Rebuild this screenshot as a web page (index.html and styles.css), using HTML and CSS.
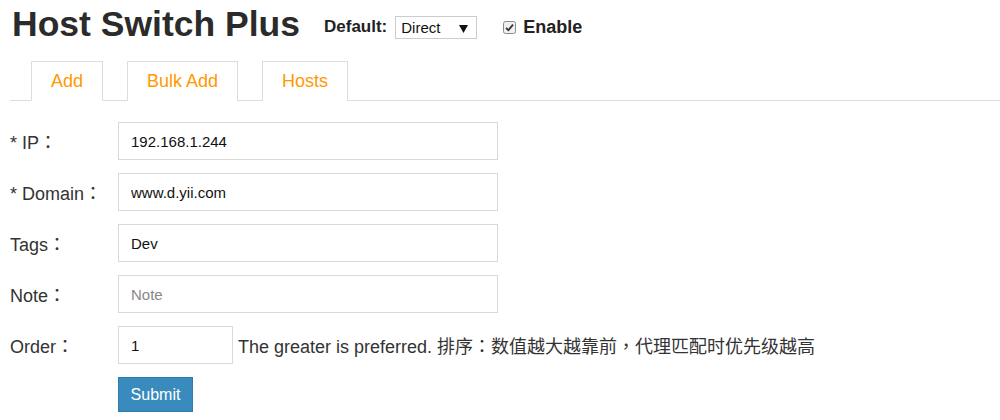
FILE: index.html
```html
<!DOCTYPE html>
<html lang="en">
<head>
<meta charset="utf-8">
<title>Host Switch Plus</title>
<link rel="stylesheet" href="styles.css">
</head>
<body>
<div class="page">
  <header class="header">
    <h1 class="title">Host Switch Plus</h1>
    <label class="default-label">Default:</label>
    <select class="select">
      <option>Direct</option>
    </select>
    <label class="enable">
      <span class="check">
        <svg width="13" height="13" viewBox="0 0 13 13"><rect x="0.5" y="0.5" width="12" height="12" rx="2" fill="#f0f0f0" stroke="#8a8a8a"/><path d="M3 6.8 L5.4 9.2 L10 3.6" fill="none" stroke="#333" stroke-width="1.8"/></svg>
      </span>
      Enable
    </label>
  </header>

  <nav class="tabs">
    <a class="tab active">Add</a>
    <a class="tab">Bulk Add</a>
    <a class="tab">Hosts</a>
  </nav>

  <form class="form">
    <div class="row">
      <label class="label">* IP：</label>
      <input class="input" type="text" value="192.168.1.244">
    </div>
    <div class="row">
      <label class="label">* Domain：</label>
      <input class="input" type="text" value="www.d.yii.com">
    </div>
    <div class="row">
      <label class="label">Tags：</label>
      <input class="input" type="text" value="Dev">
    </div>
    <div class="row">
      <label class="label">Note：</label>
      <input class="input" type="text" placeholder="Note">
    </div>
    <div class="row">
      <label class="label">Order：</label>
      <input class="input small" type="text" value="1">
      <span class="help">The greater is preferred. 排序：数值越大越靠前，代理匹配时优先级越高</span>
    </div>
    <div class="row submit-row">
      <span class="label"></span>
      <button class="btn" type="button">Submit</button>
    </div>
  </form>
</div>
</body>
</html>
```
FILE: styles.css
```css
* { box-sizing: border-box; }
body {
  margin: 0;
  background: #fff;
  font-family: "Liberation Sans", Arial, "Noto Sans CJK TC", sans-serif;
  color: #333;
}
.page { padding: 0 0 0 10px; }

.header {
  display: flex;
  align-items: center;
  height: 46px;
  padding-top: 2px;
}
.title {
  margin: 0 0 0 2px;
  font-size: 35.5px;
  font-weight: bold;
  line-height: 40px;
  color: #2b2b2b;
  margin-right: 24px;
}
.default-label {
  font-size: 17px;
  font-weight: bold;
  color: #222;
  margin-top: 6px;
  margin-right: 8px;
}
.select {
  appearance: none;
  -webkit-appearance: none;
  width: 82px;
  height: 23px;
  margin-top: 7px;
  border: 1px solid #ccc;
  border-radius: 0;
  background: #fff url("data:image/svg+xml;utf8,<svg xmlns='http://www.w3.org/2000/svg' width='9' height='8'><path d='M0 0 L9 0 L4.5 8 Z' fill='%23111'/></svg>") no-repeat 63px 8px;
  font-family: "Liberation Sans", Arial, sans-serif;
  font-size: 15px;
  color: #111;
  padding: 0 0 0 5px;
  margin-right: 26px;
}
.enable {
  display: flex;
  align-items: center;
  font-size: 18px;
  font-weight: bold;
  color: #222;
  margin-top: 6px;
}
.check { display: inline-flex; margin-right: 7px; }

.tabs {
  display: flex;
  margin-top: 15px;
  padding-left: 21px;
  border-bottom: 1px solid #ddd;
  height: 40px;
}
.tab {
  display: block;
  height: 40px;
  line-height: 39px;
  padding: 0 19px;
  margin-right: 24px;
  border: 1px solid #ddd;
  border-bottom: none;
  background: #fff;
  color: #f90;
  font-size: 18px;
}
.tab.active {
  margin-bottom: -1px;
  border-bottom: 1px solid #fff;
}

.form { padding-top: 21px; }
.row {
  display: flex;
  align-items: center;
  margin-bottom: 13px;
}
.label {
  width: 108px;
  flex: none;
  font-size: 18px;
  color: #333;
}
.input {
  width: 380px;
  height: 38px;
  border: 1px solid #d9d9d9;
  border-radius: 0;
  padding: 0 12px;
  font-family: "Liberation Sans", Arial, sans-serif;
  font-size: 15px;
  color: #111;
  outline: none;
}
.input::placeholder { color: #888; }
.input.small { width: 115px; }
.help {
  margin-left: 5px;
  font-size: 18px;
  color: #333;
}
.submit-row { margin-top: 1px; }
.btn {
  width: 75px;
  height: 35px;
  background: #398bbe;
  border: 1px solid #2f7bab;
  color: #fff;
  font-family: "Liberation Sans", Arial, sans-serif;
  font-size: 16px;
  padding: 0;
}
```
